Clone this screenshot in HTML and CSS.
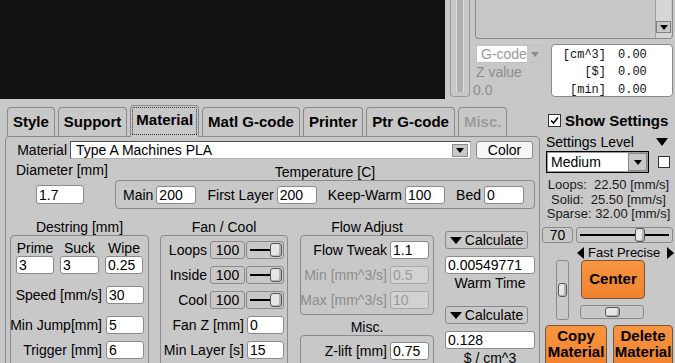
FILE: index.html
```html
<!DOCTYPE html>
<html>
<head>
  <meta charset="UTF-8">
  <title>Slicer - Material</title>
  <link rel="stylesheet" href="styles.css">
</head>
<body>
  <div class="top">
    <div class="viewport"></div>
    <div class="layer-slider"><div class="groove"></div></div>
    <div class="readout">
      <div class="listbox">
        <div class="scroll">
          <div class="scroll-btn"><span class="tri-down"></span></div>
        </div>
      </div>
      <div class="readout-row">
        <div class="gcode-col">
          <div class="popup gcode">G-code<span class="popup-arrow"><span class="tri-down grey"></span></span></div>
          <div class="muted zval">Z value</div>
          <div class="muted zlevel">0.0</div>
        </div>
        <div class="stats">
          <span>[cm^3]</span><span>0.00</span>
          <span>[$]</span><span>0.00</span>
          <span>[min]</span><span>0.00</span>
        </div>
      </div>
    </div>
  </div>

  <div class="bottom">
    <div class="tabpanel">
      <div class="tabs">
        <div class="tab">Style</div>
        <div class="tab">Support</div>
        <div class="tab active">Material</div>
        <div class="tab">Matl G-code</div>
        <div class="tab">Printer</div>
        <div class="tab">Ptr G-code</div>
        <div class="tab disabled">Misc.</div>
      </div>

      <div class="panel">
        <div class="material-row">
          <span class="row-label">Material</span>
          <div class="combo">
            <span>Type A Machines PLA</span>
            <span class="combo-arrow"><span class="tri-down"></span></span>
          </div>
          <div class="button light color-btn">Color</div>
        </div>

        <div class="specs-row">
          <div class="diameter">
            <div>Diameter [mm]</div>
            <div class="edit diameter-edit">1.7</div>
          </div>
          <div class="temperature">
            <div class="caption">Temperature [C]</div>
            <div class="group temp-group">
              <div class="pair"><span>Main</span><div class="edit temp-edit">200</div></div>
              <div class="pair"><span>First Layer</span><div class="edit temp-edit">200</div></div>
              <div class="pair"><span>Keep-Warm</span><div class="edit temp-edit">100</div></div>
              <div class="pair"><span>Bed</span><div class="edit temp-edit">0</div></div>
            </div>
          </div>
        </div>

        <div class="groups-row">
          <div class="col destring">
            <div class="caption">Destring [mm]</div>
            <div class="group destring-group">
              <div class="triple">
                <span>Prime</span><span>Suck</span><span>Wipe</span>
                <div class="edit">3</div><div class="edit">3</div><div class="edit">0.25</div>
              </div>
              <div class="field gap-12"><span>Speed [mm/s]</span><div class="edit">30</div></div>
              <div class="field gap-12"><span>Min Jump[mm]</span><div class="edit">5</div></div>
              <div class="field gap-7"><span>Trigger [mm]</span><div class="edit">6</div></div>
            </div>
          </div>

          <div class="col fan">
            <div class="caption">Fan / Cool</div>
            <div class="group fan-group">
              <div class="field">
                <span>Loops</span>
                <div class="button pct">100</div>
                <div class="hslider line fan-slider"><div class="thumb"></div></div>
              </div>
              <div class="field gap-7">
                <span>Inside</span>
                <div class="button pct">100</div>
                <div class="hslider line fan-slider"><div class="thumb"></div></div>
              </div>
              <div class="field gap-7">
                <span>Cool</span>
                <div class="button pct">100</div>
                <div class="hslider line fan-slider"><div class="thumb"></div></div>
              </div>
              <div class="field gap-7"><span>Fan Z [mm]</span><div class="edit">0</div></div>
              <div class="field gap-7"><span>Min Layer [s]</span><div class="edit">15</div></div>
            </div>
          </div>

          <div class="col flow">
            <div class="caption">Flow Adjust</div>
            <div class="group flow-group">
              <div class="field"><span>Flow Tweak</span><div class="edit">1.1</div></div>
              <div class="field gap-7 off"><span>Min [mm^3/s]</span><div class="edit">0.5</div></div>
              <div class="field gap-7 off"><span>Max [mm^3/s]</span><div class="edit">10</div></div>
            </div>
            <div class="caption misc-caption">Misc.</div>
            <div class="group misc-group">
              <div class="field"><span>Z-lift [mm]</span><div class="edit">0.75</div></div>
            </div>
          </div>

          <div class="col calc">
            <div class="button calc-btn"><span class="tri-down big"></span>Calculate</div>
            <div class="edit calc-edit">0.00549771</div>
            <div class="caption calc-caption">Warm Time</div>
            <div class="button calc-btn second"><span class="tri-down big"></span>Calculate</div>
            <div class="edit calc-edit">0.128</div>
            <div class="caption calc-caption">$ / cm^3</div>
          </div>
        </div>
      </div>
    </div>

    <div class="side">
      <div class="show-row">
        <span class="checkbox">
          <svg width="11" height="11" viewBox="0 0 11 11"><path d="M2 5.5 L4.5 8 L9 2.5" fill="none" stroke="#000" stroke-width="1.6"/></svg>
        </span>
        Show Settings
      </div>
      <div class="level-row">
        <span>Settings Level</span>
        <span class="tri-down wide"></span>
      </div>
      <div class="medium-row">
        <div class="popup focus">Medium<span class="popup-arrow"><span class="tri-down"></span></span></div>
        <span class="checkbox small"></span>
      </div>
      <div class="speeds">
        <div>Loops:&nbsp; 22.50 [mm/s]</div>
        <div>Solid:&nbsp; 25.50 [mm/s]</div>
        <div>Sparse: 32.00 [mm/s]</div>
      </div>
      <div class="quality-row">
        <div class="button quality-box">70</div>
        <div class="hslider line quality-slider"><div class="thumb" style="margin-left: 58px"></div></div>
      </div>
      <div class="fp-row">
        <span class="tri-left"></span>
        <span class="fp-text">Fast Precise</span>
        <span class="tri-right"></span>
      </div>
      <div class="nudge-row">
        <div class="vslider"><div class="thumb"></div></div>
        <div class="nudge-right">
          <div class="orange center-btn">Center</div>
          <div class="hslider nudge-slider"><div class="thumb"></div></div>
        </div>
      </div>
      <div class="action-row">
        <div class="orange copy-btn">Copy<br>Material</div>
        <div class="orange delete-btn">Delete<br>Material</div>
      </div>
    </div>
  </div>
</body>
</html>
```

FILE: styles.css
```css
* {
  box-sizing: border-box;
}

body {
  margin: 0;
  width: 675px;
  height: 363px;
  overflow: hidden;
  background-color: #c8c8c8;
  color: #000;
  font-family: 'Liberation Sans', Arial, sans-serif;
  font-size: 14px;
  line-height: 14px;
}

/* triangles */
.tri-down {
  display: inline-block;
  width: 0;
  height: 0;
  border-left: 4px solid transparent;
  border-right: 4px solid transparent;
  border-top: 5px solid #000;
}

.tri-down.grey {
  border-top-color: #8c8c8c;
}

.tri-down.big {
  border-left-width: 6px;
  border-right-width: 6px;
  border-top-width: 7px;
  margin-right: 3px;
}

.tri-down.wide {
  border-left-width: 6px;
  border-right-width: 6px;
  border-top-width: 8px;
}

.tri-left {
  width: 0;
  height: 0;
  border-top: 6px solid transparent;
  border-bottom: 6px solid transparent;
  border-right: 7px solid #000;
}

.tri-right {
  width: 0;
  height: 0;
  border-top: 6px solid transparent;
  border-bottom: 6px solid transparent;
  border-left: 7px solid #000;
}

/* top area */
.top {
  display: flex;
  height: 100px;
}

.viewport {
  width: 445px;
  height: 99px;
  background-color: #111;
}

.layer-slider {
  margin-left: 5px;
  width: 20px;
  height: 97px;
  border: 1px solid #9a9a9a;
  border-top: none;
  border-radius: 0 0 4px 4px;
  display: flex;
  justify-content: center;
}

.layer-slider .groove {
  width: 8px;
  height: 92px;
  background-color: #b0b0b0;
  border-left: 1px solid #e0e0e0;
  border-right: 1px solid #e0e0e0;
}

.readout {
  margin-left: 5px;
  width: 198px;
}

.listbox {
  height: 39px;
  border: 1px solid #8a8a8a;
  border-top: none;
  border-radius: 0 0 4px 4px;
  display: flex;
  justify-content: flex-end;
  padding-right: 1px;
}

.scroll {
  width: 16px;
  background-color: #d6d6d6;
  border-left: 1px solid #a0a0a0;
  display: flex;
  flex-direction: column;
  justify-content: flex-end;
  padding-bottom: 5px;
}

.scroll-btn {
  height: 12px;
  background-color: #c8c8c8;
  border: 1px solid #808080;
  display: flex;
  align-items: center;
  justify-content: center;
}

.readout-row {
  display: flex;
  margin-top: 5px;
}

.gcode-col {
  width: 76px;
}

.popup {
  display: flex;
  align-items: center;
  justify-content: space-between;
  background-color: #fff;
  padding-left: 4px;
}

.popup-arrow {
  display: flex;
  align-items: center;
  justify-content: center;
  background-color: #c8c8c8;
}

.popup.gcode {
  margin: 1px 0 0 1px;
  width: 67px;
  height: 18px;
  border: 1px solid #c0c0c0;
  color: #9a9a9a;
}

.popup.gcode .popup-arrow {
  width: 15px;
  height: 16px;
}

.muted {
  color: #8c8c8c;
}

.zval {
  margin-top: 2px;
  margin-left: 1px;
}

.zlevel {
  margin-top: 4px;
  margin-left: -2px;
}

.stats {
  width: 122px;
  height: 53px;
  background-color: #fff;
  border: 1px solid #8a8a8a;
  border-radius: 4px;
  display: grid;
  grid-template-columns: 54px auto;
  grid-auto-rows: 17.5px;
  column-gap: 12px;
  align-items: center;
  padding-top: 1px;
  font-family: 'Liberation Mono', 'Courier New', monospace;
  font-size: 12px;
  color: #111;
}

.stats span:nth-child(odd) {
  text-align: right;
}

/* tab panel */
.bottom {
  display: flex;
}

.tabpanel {
  margin-left: 5px;
  width: 535px;
}

.tabs {
  display: flex;
  align-items: flex-end;
  height: 36px;
  padding-left: 2px;
  gap: 3px;
}

.tab {
  height: 29px;
  padding: 0 5px;
  border: 1px solid #8a8a8a;
  border-bottom: none;
  border-radius: 4px 4px 0 0;
  font-size: 15px;
  font-weight: bold;
  display: flex;
  align-items: center;
}

.tab.active {
  position: relative;
  height: 32px;
  margin-bottom: -1px;
  background-color: #c8c8c8;
  padding-bottom: 3px;
  outline: 1px dotted #333;
  outline-offset: -3px;
}

.tab.disabled {
  color: #9c9c9c;
}

.panel {
  height: 240px;
  border: 1px solid #8a8a8a;
  border-radius: 4px;
}

.material-row {
  display: flex;
  align-items: center;
  margin-top: 4px;
  height: 18px;
}

.row-label {
  width: 64px;
  padding-right: 3px;
  text-align: right;
}

.combo {
  width: 401px;
  height: 18px;
  background-color: #fff;
  border: 1px solid #555;
  border-right-color: #b0b0b0;
  border-bottom-color: #b0b0b0;
  display: flex;
  align-items: center;
  justify-content: space-between;
  padding-left: 5px;
  padding-right: 2px;
}

.combo-arrow {
  width: 16px;
  height: 13px;
  background-color: #c8c8c8;
  border: 1px solid #8a8a8a;
  display: flex;
  align-items: center;
  justify-content: center;
}

.button {
  background-color: #c8c8c8;
  border: 1px solid #8a8a8a;
  border-radius: 3px;
  display: flex;
  align-items: center;
  justify-content: center;
  white-space: nowrap;
}

.button.light {
  background-color: #f7f7f7;
}

.color-btn {
  margin-left: 5px;
  width: 57px;
  height: 18px;
}

.edit {
  height: 18px;
  background-color: #fff;
  border: 1px solid #8a8a8a;
  border-radius: 3px;
  padding-left: 2px;
  display: flex;
  align-items: center;
  white-space: nowrap;
  overflow: hidden;
}

.specs-row {
  display: flex;
  height: 50px;
}

.diameter {
  width: 109px;
  padding-left: 10px;
  padding-top: 4px;
}

.diameter-edit {
  margin-top: 8px;
  margin-left: 20px;
  width: 48px;
  height: 19px;
}

.temperature {
  width: 420px;
  padding-top: 6px;
}

.caption {
  text-align: center;
  line-height: 14px;
}

.group {
  border: 1px solid #8a8a8a;
  border-radius: 4px;
}

.temp-group {
  margin-top: 1px;
  height: 29px;
  display: flex;
  justify-content: space-between;
  padding: 5px 10px 0 7px;
}

.pair {
  display: flex;
  align-items: center;
  gap: 3px;
  height: 18px;
}

.temp-edit {
  width: 40px;
}

.groups-row {
  display: flex;
}

.col .caption:first-child {
  margin-top: 11px;
}

.col .group {
  margin-top: 1px;
}

.destring {
  margin-left: 4px;
  width: 139px;
}

.destring-group {
  height: 140px;
  padding-top: 5px;
}

.triple {
  display: grid;
  grid-template-columns: 38px 39px 38px;
  column-gap: 6px;
  row-gap: 1px;
  padding-left: 5px;
  text-align: center;
}

.field {
  display: flex;
  align-items: center;
  justify-content: flex-end;
  gap: 4px;
  height: 18px;
  padding-right: 4px;
}

.field span {
  flex-shrink: 0;
  white-space: nowrap;
}

.field .edit {
  flex-shrink: 0;
  width: 38px;
}

.gap-12 {
  margin-top: 12px;
}

.gap-7 {
  margin-top: 7px;
}

.fan {
  margin-left: 11px;
  width: 128px;
}

.fan-group {
  height: 140px;
  padding-top: 5px;
}

.fan-group .field {
  gap: 3px;
  padding-right: 3px;
}

.fan-group .field .edit {
  width: 37px;
}

.pct {
  width: 35px;
  height: 18px;
}

.hslider {
  display: flex;
  align-items: center;
  border: 1px solid #8a8a8a;
  border-radius: 3px;
  background-color: #c8c8c8;
}

.hslider.line {
  background: linear-gradient(#000, #000) center / calc(100% - 6px) 2px no-repeat, #c8c8c8;
}

.thumb {
  background-color: #e6e6e6;
  border: 1px solid #555;
  border-radius: 3px;
  box-shadow: inset -2px -1px #b4b4b4;
}

.fan-slider {
  margin-left: -2px;
  width: 38px;
  height: 18px;
  justify-content: flex-end;
  padding-right: 1px;
}

.fan-slider .thumb {
  width: 12px;
  height: 14px;
}

.flow {
  margin-left: 12px;
  width: 134px;
}

.flow-group {
  height: 80px;
  padding-top: 5px;
}

.flow .field {
  gap: 3px;
}

.flow .field .edit {
  width: 39px;
}

.field.off {
  color: #8c8c8c;
}

.field.off .edit {
  background-color: #d2d2d2;
  border-color: #a8a8a8;
  color: #9a9a9a;
}

.misc-caption {
  margin-top: 5px;
}

.misc-group {
  height: 40px;
  padding-top: 6px;
}

.calc {
  margin-left: 11px;
  width: 90px;
}

.calc-btn {
  margin-top: 22px;
  width: 83px;
  height: 18px;
}

.calc-btn.second {
  margin-top: 16px;
}

.calc-edit {
  margin-top: 7px;
  width: 90px;
}

.calc-caption {
  margin-top: 2px;
}

/* side column */
.side {
  margin-left: 2px;
  width: 133px;
}

.show-row {
  display: flex;
  align-items: center;
  gap: 4px;
  margin-top: 12px;
  padding-left: 6px;
  height: 17px;
  font-size: 15px;
  font-weight: bold;
}

.checkbox {
  width: 13px;
  height: 13px;
  background-color: #fff;
  border: 1px solid #333;
  display: flex;
  align-items: center;
  justify-content: center;
}

.checkbox.small {
  width: 12px;
  height: 12px;
}

.level-row {
  display: flex;
  align-items: center;
  justify-content: space-between;
  margin-top: 5px;
  height: 16px;
  padding-left: 4px;
  padding-right: 7px;
}

.medium-row {
  display: flex;
  align-items: center;
  gap: 9px;
  margin-top: 1px;
  height: 22px;
  padding-left: 4px;
}

.popup.focus {
  width: 103px;
  height: 22px;
  border: 1px solid #000;
  box-shadow: inset 0 0 0 1px #9a9a9a;
}

.popup.focus .popup-arrow {
  width: 19px;
  height: 18px;
  margin-right: 1px;
  border: 1px solid #8a8a8a;
}

.speeds {
  margin-top: 5px;
  font-size: 13px;
  line-height: 14.5px;
  text-align: center;
  color: #1a1a1a;
}

.quality-row {
  display: flex;
  gap: 3px;
  margin-top: 5px;
  height: 16px;
}

.quality-box {
  width: 31px;
}

.quality-slider {
  width: 97px;
}

.quality-slider .thumb {
  width: 10px;
  height: 14px;
}

.fp-row {
  display: flex;
  align-items: center;
  margin-top: 4px;
  height: 12px;
  padding-left: 35px;
  font-size: 13px;
}

.fp-text {
  margin: 0 7px 0 4px;
}

.nudge-row {
  display: flex;
  margin-top: 1px;
  height: 60px;
}

.vslider {
  margin-left: 14px;
  width: 13px;
  height: 60px;
  border: 1px solid #8a8a8a;
  border-radius: 3px;
  display: flex;
  align-items: center;
  justify-content: center;
}

.vslider .thumb {
  width: 9px;
  height: 14px;
}

.nudge-right {
  margin-left: 11px;
  width: 65px;
}

.orange {
  background: linear-gradient(#f9953f, #ef8230);
  border: 1px solid #7a5436;
  border-radius: 4px;
  font-size: 15px;
  font-weight: bold;
  display: flex;
  align-items: center;
  justify-content: center;
  text-align: center;
}

.center-btn {
  margin-left: 1px;
  width: 64px;
  height: 39px;
}

.nudge-slider {
  margin-top: 6px;
  width: 64px;
  height: 14px;
  justify-content: center;
}

.nudge-slider .thumb {
  width: 15px;
  height: 10px;
}

.action-row {
  display: flex;
  gap: 6px;
  margin-top: 5px;
  padding-left: 3px;
}

.copy-btn,
.delete-btn {
  height: 42px;
  line-height: 15.5px;
  padding-bottom: 4px;
}

.copy-btn {
  width: 62px;
}

.delete-btn {
  width: 60px;
}
```
